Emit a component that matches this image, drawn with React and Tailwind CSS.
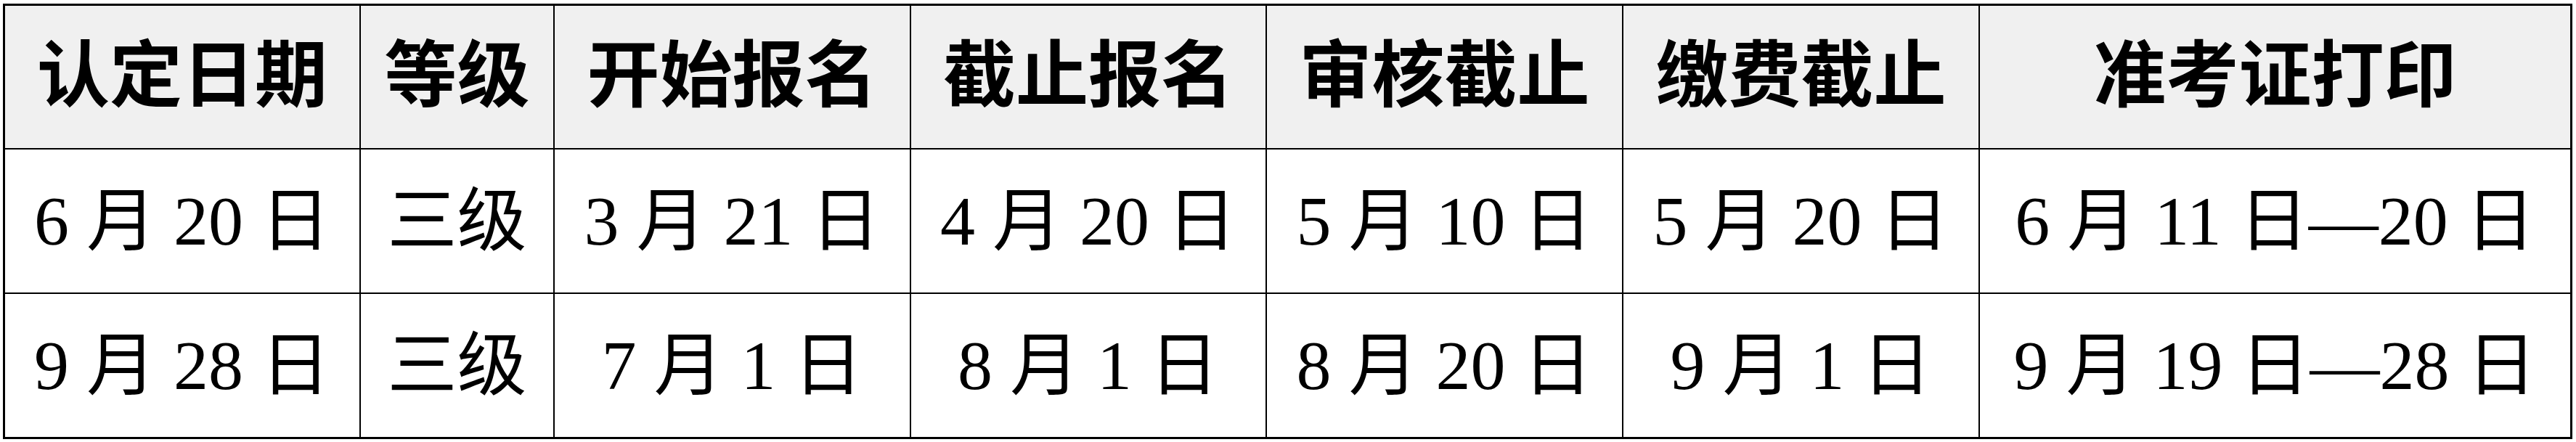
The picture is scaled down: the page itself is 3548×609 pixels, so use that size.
const header = ["认定日期", "等级", "开始报名", "截止报名", "审核截止", "缴费截止", "准考证打印"]

const rows = [
  ["6 月 20 日", "三级", "3 月 21 日", "4 月 20 日", "5 月 10 日", "5 月 20 日", "6 月 11 日—20 日"],
  ["9 月 28 日", "三级", "7 月 1 日", "8 月 1 日", "8 月 20 日", "9 月 1 日", "9 月 19 日—28 日"],
]

function Cell({ children, lastCol, lastRow, head }) {
  return (
    <div
      className={
        "flex items-center justify-center border-black whitespace-nowrap " +
        (lastCol ? "" : "border-r-2 ") +
        (lastRow ? "" : "border-b-2 ") +
        (head ? "bg-[#f0f0f0] text-[100px] font-semibold" : "bg-white text-[96px] font-normal")
      }
    >
      {children}
    </div>
  )
}

export default function App() {
  return (
    <div className="min-h-screen bg-white pt-[5px] pl-[4px] text-black font-['Liberation_Serif','Noto_Sans_CJK_SC',serif] leading-none">
      <div className="grid w-fit grid-cols-[490px_267px_491px_490px_491px_491px_813px] grid-rows-[198px_199px_197px] border-[3px] border-black">
        {header.map((h, i) => (
          <Cell key={h} head lastCol={i === header.length - 1}>
            {h}
          </Cell>
        ))}
        {rows.map((row, r) =>
          row.map((v, i) => (
            <Cell key={r + "-" + i} lastCol={i === row.length - 1} lastRow={r === rows.length - 1}>
              {v}
            </Cell>
          ))
        )}
      </div>
    </div>
  )
}
